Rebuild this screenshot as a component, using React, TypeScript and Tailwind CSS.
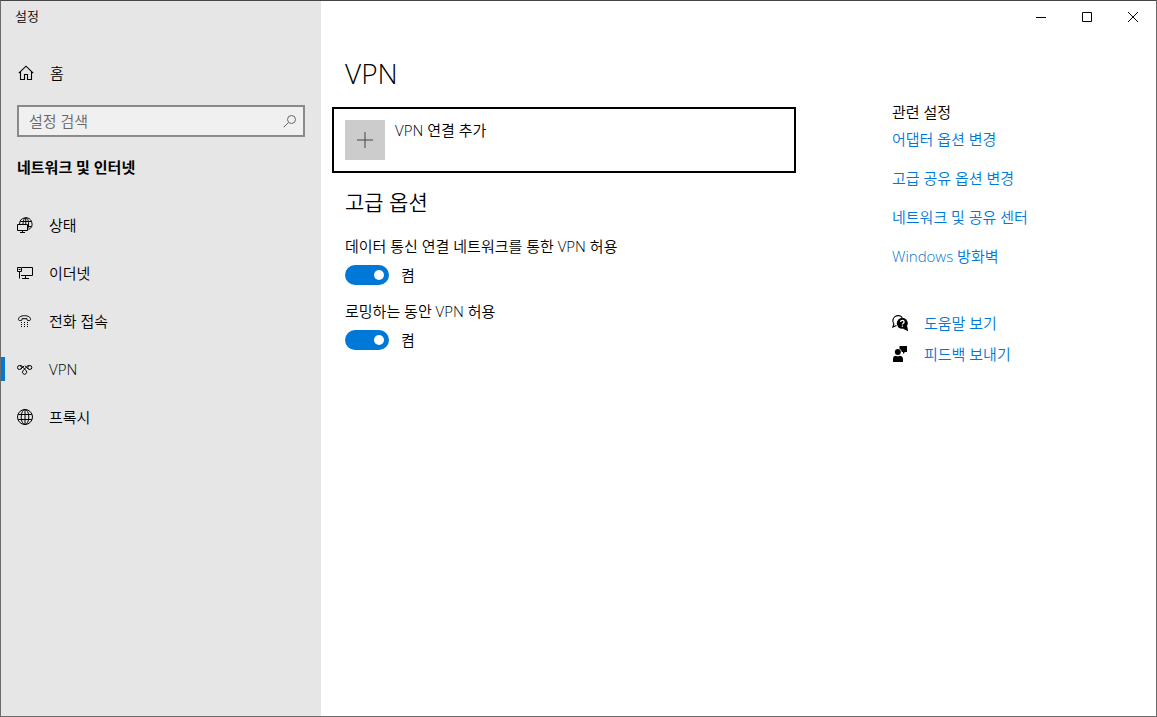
import { useState, type ReactNode } from "react";

const navItems = [
  { name: "상태", icon: <StatusIcon /> },
  { name: "이더넷", icon: <EthernetIcon /> },
  { name: "전화 접속", icon: <DialupIcon /> },
  { name: "VPN", icon: <VpnIcon />, active: true },
  { name: "프록시", icon: <GlobeIcon /> },
];

const relatedLinks = ["어댑터 옵션 변경", "고급 공유 옵션 변경", "네트워크 및 공유 센터", "Windows 방화벽"];

const supportLinks = [
  { name: "도움말 보기", icon: <HelpIcon /> },
  { name: "피드백 보내기", icon: <FeedbackIcon /> },
];

function Icon({ children }: { children: ReactNode }) {
  return (
    <svg
      viewBox="0 0 16 16"
      className="size-4 shrink-0 overflow-visible"
      fill="none"
      stroke="currentColor"
      aria-hidden="true"
    >
      {children}
    </svg>
  );
}

function HomeIcon() {
  return (
    <Icon>
      <path d="M.8 8.2 8 1.2l7.2 7M2.5 6.8v7.7h4v-5h3v5h4V6.8" strokeWidth="1.1" />
    </Icon>
  );
}

function StatusIcon() {
  return (
    <Icon>
      <path d="M2.6 7A6.2 6.2 0 1 1 11.5 12.6M3.4 4.5h11M10.5 9.5h4M6 7C6.2 3 7.4.8 8.8.8s2.8 2.5 2.8 6.2c0 2-.3 3.8-.9 5M8.8.8V7" />
      <path d="M.5 7.5h10v6H.5zM5.5 13.5v2M3 15.5h5" />
    </Icon>
  );
}

function EthernetIcon() {
  return (
    <Icon>
      <path d="M5 2.5h10.5v8H4M8.5 10.5V13M5 13.5h7" />
      <path d="M.5 2.5h4v4h-4zM1.5 4.5h2M2.5 6.5v7" />
    </Icon>
  );
}

function DialupIcon() {
  return (
    <Icon>
      <path d="M1.5 6.3C1.5 4 4 2.700 7.500 2.700s6 1.300 6 3.600c0 1-.5 1.200-1.300 1.200h-1c-.8 0-1.200-.3-1.200-1v-.8H5v.8c0 .7-.4 1-1.200 1h-1c-.8 0-1.300-.2-1.300-1.200z" />
      <path
        d="M4 9h1v1H4zM7 9h1v1H7zM10 9h1v1h-1zM4 11h1v1H4zM7 11h1v1H7zM10 11h1v1h-1zM4 13h1v1H4zM7 13h1v1H7zM10 13h1v1h-1z"
        fill="currentColor"
        stroke="none"
      />
    </Icon>
  );
}

function VpnIcon() {
  return (
    <Icon>
      <circle cx="2.5" cy="6.5" r="2" />
      <circle cx="12.8" cy="6.5" r="2" />
      <path d="M3 4.5c1.8 0 2.6.9 3.2 1.9l3 3.4a2.1 2.1 0 1 1-3.200 0l3-3.400c.6-1 1.500-1.900 3.300-1.900M3.800 8.200 7.200 4.800M11.500 8.200 8 4.800" />
    </Icon>
  );
}

function GlobeIcon() {
  return (
    <Icon>
      <circle cx="8" cy="8" r="7.5" />
      <ellipse cx="8" cy="8" rx="3.8" ry="7.5" />
      <path d="M8 .5v15M1.3 5.5h13.4M1.3 10.5h13.4" />
    </Icon>
  );
}

function HelpIcon() {
  return (
    <Icon>
      <path d="M4.5 10.6.8 12l1.100-3A5.200 5.200 0 1 1 10.300 2.700" strokeWidth="1.1" />
      <circle cx="10.3" cy="8.3" r="5.5" fill="currentColor" stroke="none" />
      <path d="m15 10.500 1.200 5.700-5.200-2.500z" fill="currentColor" stroke="none" />
      <path d="M8.6 7c0-2.200 3.500-2.200 3.500 0 0 1.200-1.700 1.200-1.700 2.600M10.400 10.500v1.300" className="stroke-white" strokeWidth="1.3" />
    </Icon>
  );
}

function FeedbackIcon() {
  return (
    <Icon>
      <g fill="currentColor" stroke="none">
        <path d="M7.5 0H15v6h-2l-2 2V6H9.800A4 4 0 0 0 7.500 2.800z" />
        <circle cx="5.8" cy="6" r="3" />
        <path d="M1 16v-3c0-2 1.300-3.200 3-3.200.9.700 2.700.7 3.600 0 1.700 0 3.400 1.200 3.400 3.200v3z" />
      </g>
    </Icon>
  );
}

function Toggle({ label }: { label: string }) {
  const [on, setOn] = useState(true);

  return (
    <label className="block">
      <span className="block leading-[22px]">{label}</span>
      <span className="mt-2 flex h-5 items-center gap-3">
        <input
          type="checkbox"
          role="switch"
          checked={on}
          onChange={(e) => setOn(e.target.checked)}
          className="flex h-5 w-11 appearance-none items-center rounded-full bg-neutral-500 px-[5px] before:size-[10px] before:rounded-full before:bg-white checked:justify-end checked:bg-[#0078d7]"
        />
        <span>{on ? "켬" : "끔"}</span>
      </span>
    </label>
  );
}

export default function App() {
  return (
    <div className="flex min-h-screen border border-[#6b6b6b] border-t-[#444] bg-white font-['Open_Sans','Noto_Sans_CJK_KR',sans-serif] text-[15px] font-[350] text-black">
      <aside className="w-80 shrink-0 bg-[#e6e6e6]">
        <div className="flex h-8 items-center px-[14px] text-[13px]">설정</div>
        <a href="#home" className="mt-5 flex h-10 items-center gap-4 px-[17px]">
          <HomeIcon />
          홈
        </a>
        <div className="mx-4 mt-3 flex h-8 items-center border-2 border-[#8a8a8a] bg-[#f0f0f0] pr-[6px] pl-[10px] text-[#666]">
          <input
            type="search"
            aria-label="설정 검색"
            placeholder="설정 검색"
            className="min-w-0 flex-1 bg-transparent outline-none placeholder:text-[#666]"
          />
          <svg viewBox="0 0 14 14" className="size-[14px]" fill="none" stroke="currentColor" aria-hidden="true">
            <circle cx="8.5" cy="5.5" r="4" />
            <path d="M5.5 8.5.7 13.3" />
          </svg>
        </div>
        <h2 className="mt-[14px] px-4 leading-8 font-bold">네트워크 및 인터넷</h2>
        <nav className="mt-[18px]">
          {navItems.map((item) => (
            <a key={item.name} href="#" className="flex h-12 items-center">
              <span className={`h-6 w-1 ${item.active ? "bg-[#0078d7]" : ""}`} />
              <span className="flex items-center gap-4 pl-3">
                {item.icon}
                {item.name}
              </span>
            </a>
          ))}
        </nav>
      </aside>

      <div className="flex-1">
        <div className="flex h-8 justify-end">
          <button aria-label="최소화" className="flex w-[46px] items-center justify-center">
            <svg viewBox="0 0 10 10" className="size-[10px]" stroke="currentColor">
              <path d="M0 5.5h10" />
            </svg>
          </button>
          <button aria-label="최대화" className="flex w-[46px] items-center justify-center">
            <svg viewBox="0 0 10 10" className="size-[10px]" stroke="currentColor" fill="none">
              <path d="M.5.5h9v9h-9z" />
            </svg>
          </button>
          <button aria-label="닫기" className="flex w-[46px] items-center justify-center">
            <svg viewBox="0 0 10 10" className="size-[10px]" stroke="currentColor">
              <path d="m0 0 10 10M10 0 0 10" />
            </svg>
          </button>
        </div>

        <div className="mt-5 flex gap-24 pl-[11px]">
          <main className="flex-1">
            <h1 className="px-[13px] text-[28px] leading-10 font-light">VPN</h1>
            <button className="mt-[14px] flex w-full items-start gap-[10px] border-2 border-black p-[11px] text-left">
              <span className="flex size-10 items-center justify-center bg-[#ccc] text-[#444]">
                <svg viewBox="0 0 16 16" className="size-4" stroke="currentColor" aria-hidden="true">
                  <path d="M8 0v16M0 8h16" />
                </svg>
              </span>
              <span className="leading-5">VPN 연결 추가</span>
            </button>
            <section className="px-[13px]">
              <h2 className="mt-[13px] text-[21px] leading-8">고급 옵션</h2>
              <div className="mt-[17px] space-y-[15px]">
                <Toggle label="데이터 통신 연결 네트워크를 통한 VPN 허용" />
                <Toggle label="로밍하는 동안 VPN 허용" />
              </div>
            </section>
          </main>

          <aside className="w-[264px] pt-12 leading-[22px]">
            <h3 className="font-[350]">관련 설정</h3>
            <ul className="mt-[5px] space-y-[17px] text-[#0078d7]">
              {relatedLinks.map((link) => (
                <li key={link}>
                  <a href="#">{link}</a>
                </li>
              ))}
            </ul>
            <ul className="mt-[45px] space-y-[9px]">
              {supportLinks.map((link) => (
                <li key={link.name}>
                  <a href="#" className="flex items-center gap-4">
                    {link.icon}
                    <span className="text-[#0078d7]">{link.name}</span>
                  </a>
                </li>
              ))}
            </ul>
          </aside>
        </div>
      </div>
    </div>
  );
}
